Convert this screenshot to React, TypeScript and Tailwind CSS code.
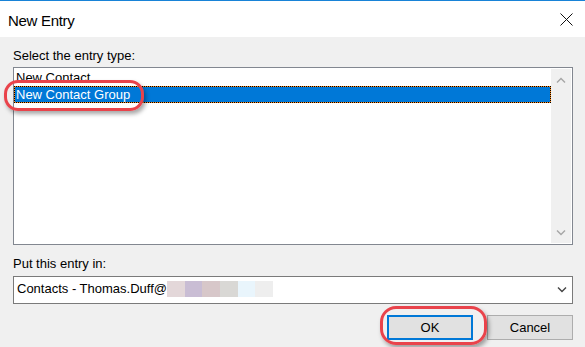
import React from "react";

const blurBlocks = [
  { w: 18, c: "#e3d7d9" },
  { w: 17, c: "#c9bdd4" },
  { w: 18, c: "#d7c7c9" },
  { w: 18, c: "#d9d8d5" },
  { w: 17, c: "#e9f5fc" },
  { w: 18, c: "#eeeeee" },
];

function Chevron({ up, color, className }: { up?: boolean; color: string; className?: string }) {
  return (
    <svg width="10" height="6" viewBox="0 0 10 6" className={className}>
      <path
        d={up ? "M1 5.5 L5 1.5 L9 5.5" : "M1 0.5 L5 4.5 L9 0.5"}
        fill="none"
        stroke={color}
        strokeWidth="1.4"
      />
    </svg>
  );
}

export default function App() {
  return (
    <div className="relative w-[585px] h-[347px] overflow-hidden bg-[#f0f0f0] font-['Liberation_Sans',Arial,sans-serif] text-black">
      <div className="h-px bg-[#1883d7]" />

      {/* title bar */}
      <div className="flex h-[36px] items-start justify-between bg-white pl-[8px] pr-[12px]">
        <span className="mt-[11px] text-[15px] leading-[17px] tracking-[-0.3px]">New Entry</span>
        <svg width="13" height="13" viewBox="0 0 13 13" className="mt-[12px]">
          <path d="M0.5 0.5 L12.5 12.5 M12.5 0.5 L0.5 12.5" stroke="#111" strokeWidth="1" />
        </svg>
      </div>

      {/* body */}
      <div className="pl-[13px] pr-[12px] pt-[11px] text-[13px] leading-[15px]">
        <div>Select the entry type:</div>

        <div className="mt-[4px] flex h-[178px] border border-[#828790] bg-white pr-px">
          <div className="flex-1 pt-px">
            <div className="flex h-[17px] items-center pl-[2px]">New Contact</div>
            <div className="h-[17px] border border-dotted border-black bg-[#ff8c1a]">
              <div className="flex h-full items-center bg-[#0078d7] pl-px text-white">
                New Contact Group
              </div>
            </div>
          </div>
          <div className="my-px flex w-[20px] flex-col items-center justify-between bg-[#f0f0f0] pt-[8px] pb-[7px]">
            <Chevron up color="#a6a6a6" />
            <Chevron color="#a6a6a6" />
          </div>
        </div>

        <div className="mt-[11px]">Put this entry in:</div>

        <div className="mt-[5px] flex h-[28px] items-center justify-between border border-[#7a7a7a] bg-white pb-[3px] pl-[3px] pr-[5px]">
          <div className="flex items-center">
            <span>Contacts - Thomas.Duff@</span>
            <div className="flex h-[16px]">
              {blurBlocks.map((b, i) => (
                <span key={i} className="h-full" style={{ width: b.w, background: b.c }} />
              ))}
            </div>
          </div>
          <Chevron color="#444" className="mt-[3px]" />
        </div>

        <div className="mt-[11px] flex justify-end gap-[14px]">
          <button className="h-[25px] w-[86px] border-2 border-[#0078d7] bg-[#e1e1e1] text-[13px]">
            OK
          </button>
          <button className="h-[25px] w-[86px] border border-[#adadad] bg-[#e1e1e1] text-[13px]">
            Cancel
          </button>
        </div>
      </div>

      {/* red annotation rings */}
      <div className="pointer-events-none absolute left-[4px] top-[80px] h-[31px] w-[140px] rounded-[14px] border-[3px] border-[#e9434b] shadow-[2px_3px_4px_rgba(0,0,0,0.35)]" />
      <div className="pointer-events-none absolute left-[380px] top-[306px] h-[39px] w-[107px] rounded-[16px] border-[3px] border-[#e9434b] shadow-[2px_3px_4px_rgba(0,0,0,0.35)]" />
    </div>
  );
}
